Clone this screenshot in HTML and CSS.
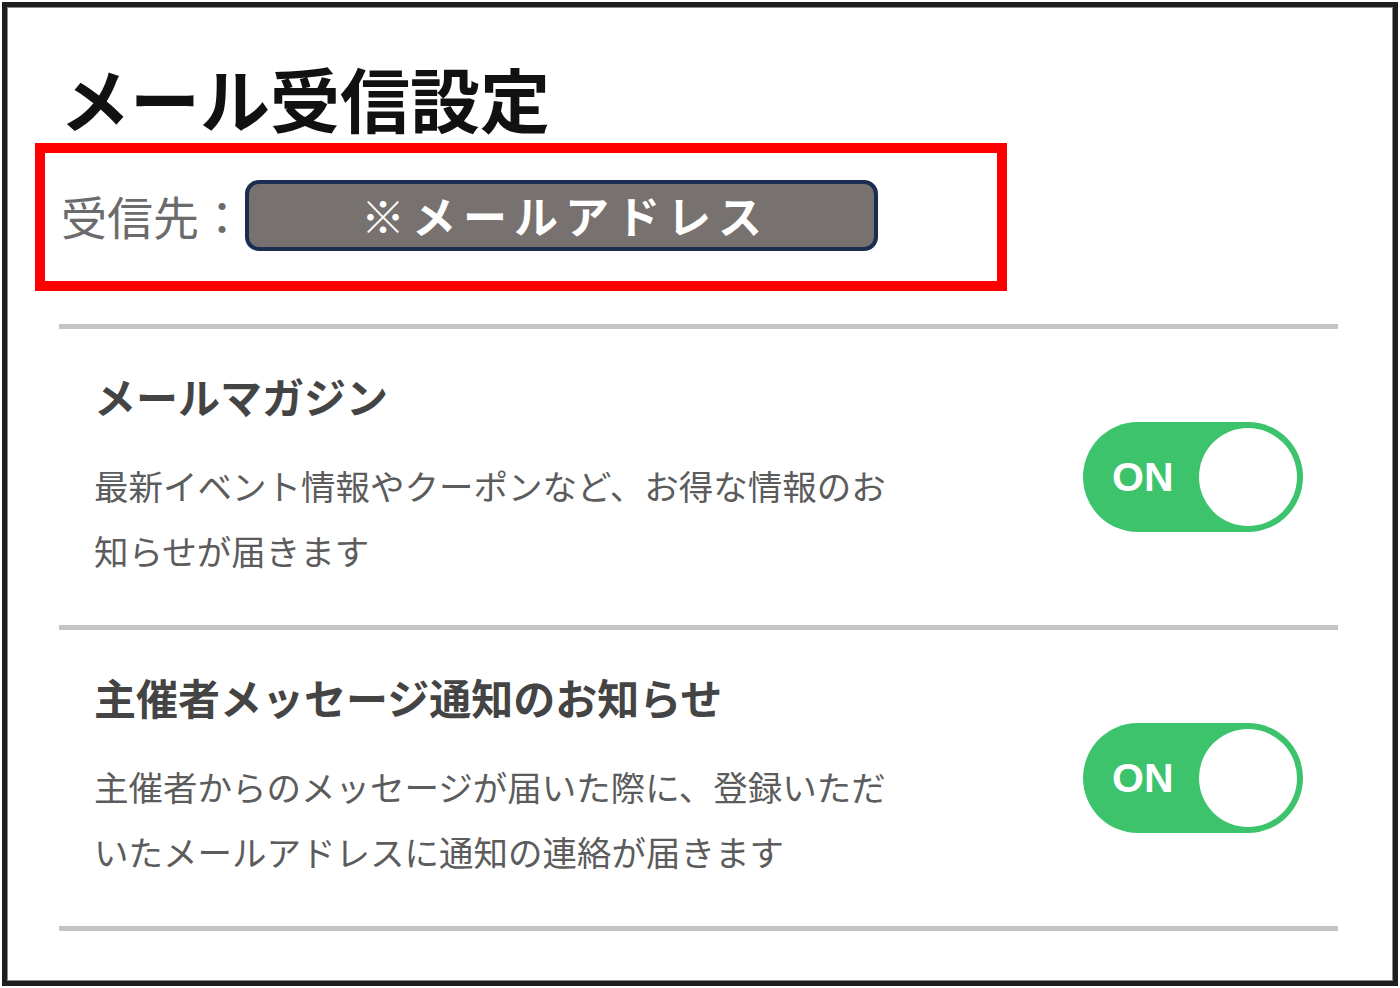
FILE: index.html
```html
<!DOCTYPE html>
<html lang="ja">

<head>
    <meta charset="UTF-8">
    <meta name="viewport" content="width=device-width, initial-scale=1.0">
    <title>メール受信設定</title>

    <link rel="stylesheet" href="styles.css">
</head>

<body>
    <div class="frame">
        <h1 class="title">メール受信設定</h1>

        <!-- 受信先 -->
        <div class="dest">
            <span class="dest-label">受信先：</span>
            <span class="dest-address">※メールアドレス</span>
        </div>

        <ul class="settings">
            <li class="setting">
                <div class="setting-text">
                    <h2>メールマガジン</h2>
                    <p>最新イベント情報やクーポンなど、お得な情報のお知らせが届きます</p>
                </div>
                <div class="toggle">
                    <span class="toggle-label">ON</span>
                    <span class="toggle-knob"></span>
                </div>
            </li>
            <li class="setting">
                <div class="setting-text">
                    <h2>主催者メッセージ通知のお知らせ</h2>
                    <p>主催者からのメッセージが届いた際に、登録いただいたメールアドレスに通知の連絡が届きます</p>
                </div>
                <div class="toggle">
                    <span class="toggle-label">ON</span>
                    <span class="toggle-knob"></span>
                </div>
            </li>
        </ul>
    </div>
</body>

</html>
```

FILE: styles.css
```css
body,
ul,
li,
h1,
h2,
p {
    padding: 0;
    margin: 0;
    list-style: none;
}

body {
    background: #fff;
    font-family: "Noto Sans CJK JP", sans-serif;
}

/* 外枠 */
.frame {
    box-sizing: border-box;
    width: 1396px;
    height: 984px;
    margin: 2px;
    border: 5px solid #1e1e1e;
    box-shadow: inset 0 0 0 1px #8a8a8a;
    background: #fff;
}

.title {
    margin: 56px 0 0 53px;
    font-size: 70px;
    line-height: 70px;
    font-weight: 700;
    color: #111;
}

/* 赤枠：受信先 */
.dest {
    box-sizing: border-box;
    display: flex;
    width: 972px;
    height: 148px;
    margin: 10px 0 0 28px;
    padding: 27px 0 0 16px;
    border: 10px solid #ff0000;
}

.dest-label {
    font-size: 46px;
    line-height: 71px;
    color: #6b6b6b;
}

.dest-address {
    box-sizing: border-box;
    width: 633px;
    height: 71px;
    padding-left: 7px;
    border: 4px solid #1b2d50;
    border-radius: 14px;
    background: #77726f;
    color: #fff;
    font-size: 44px;
    font-weight: 700;
    line-height: 62px;
    letter-spacing: 7px;
    text-align: center;
}

/* 設定リスト */
.settings {
    margin: 33px 55px 0 52px;
    border-top: 5px solid #c4c4c4;
}

.setting {
    display: flex;
    align-items: center;
    justify-content: space-between;
    padding: 42px 35px;
    border-bottom: 5px solid #c4c4c4;
}

.setting-text h2 {
    font-size: 42px;
    line-height: 50px;
    font-weight: 700;
    color: #444;
}

.setting-text p {
    width: 800px;
    margin-top: 32px;
    font-size: 34.5px;
    line-height: 65px;
    color: #5c5c5c;
}

/* トグル */
.toggle {
    box-sizing: border-box;
    display: flex;
    align-items: center;
    justify-content: space-between;
    width: 220px;
    height: 110px;
    padding: 0 6px 0 29px;
    border-radius: 55px;
    background: #3cc36c;
}

.toggle-label {
    font-family: "Liberation Sans", Arial, sans-serif;
    font-size: 41px;
    font-weight: 700;
    color: #fff;
}

.toggle-knob {
    width: 98px;
    height: 98px;
    border-radius: 50%;
    background: #fff;
}
```
